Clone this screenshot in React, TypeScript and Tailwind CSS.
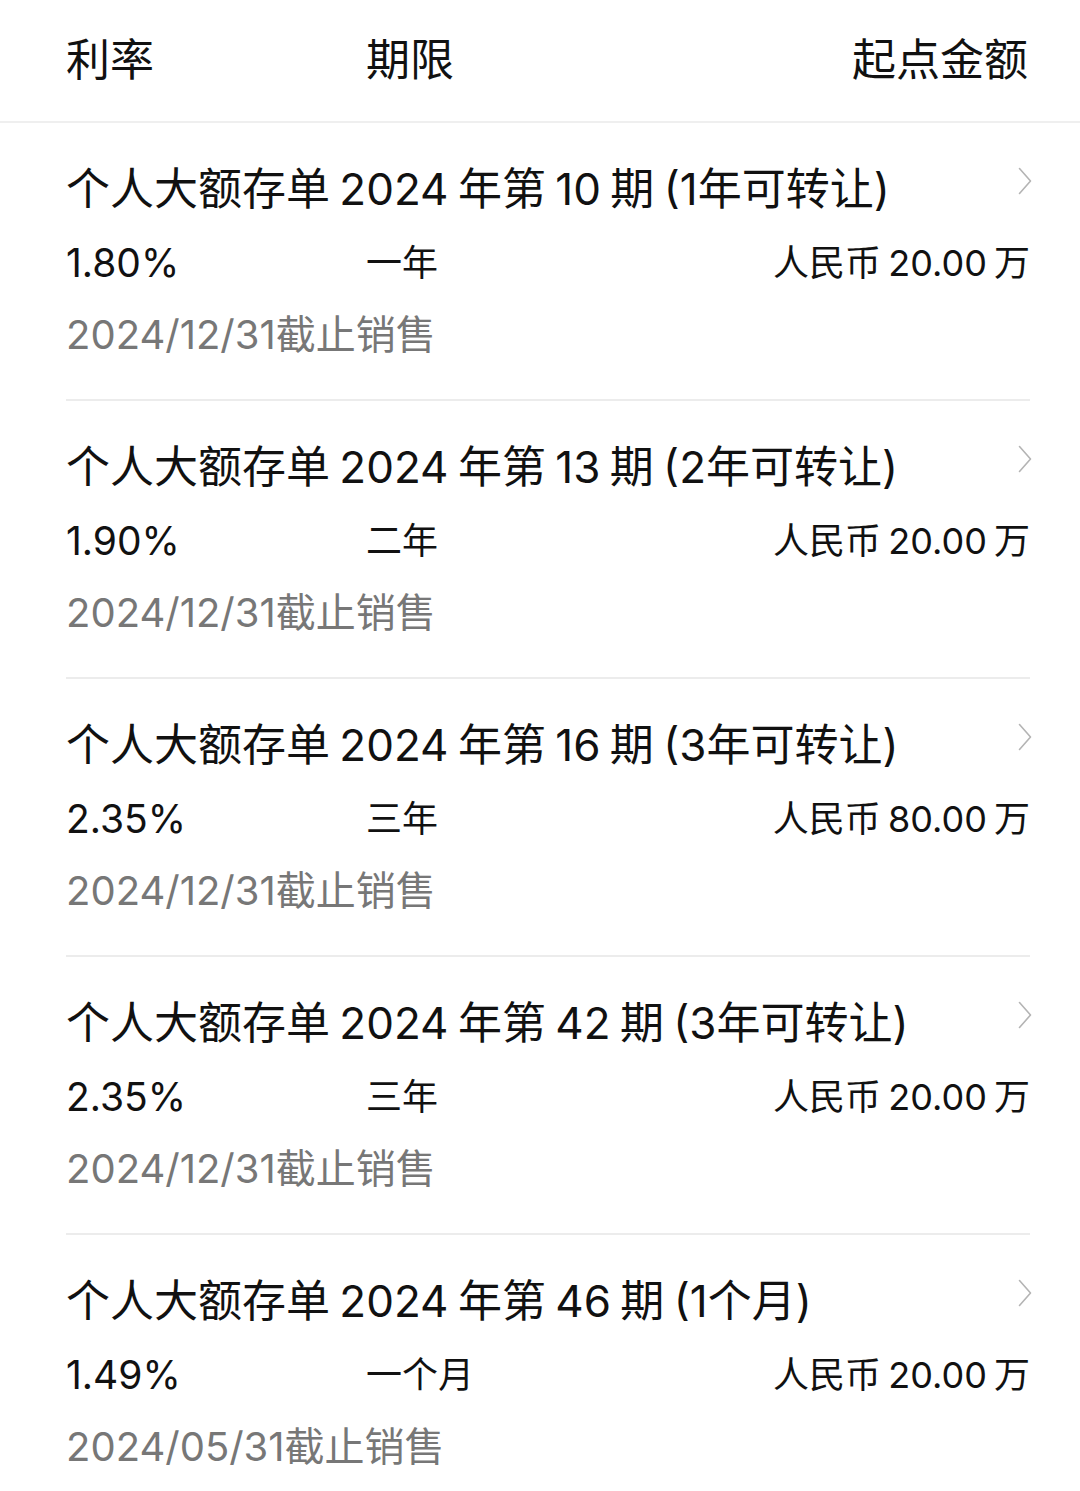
import React from 'react';

interface Deposit {
  title: string;
  rate: string;
  term: string;
  amount: string;
  deadline: string;
}

const deposits: Deposit[] = [
  { title: '个人大额存单 2024 年第 10 期 (1年可转让)', rate: '1.80%', term: '一年', amount: '人民币 20.00 万', deadline: '2024/12/31截止销售' },
  { title: '个人大额存单 2024 年第 13 期 (2年可转让)', rate: '1.90%', term: '二年', amount: '人民币 20.00 万', deadline: '2024/12/31截止销售' },
  { title: '个人大额存单 2024 年第 16 期 (3年可转让)', rate: '2.35%', term: '三年', amount: '人民币 80.00 万', deadline: '2024/12/31截止销售' },
  { title: '个人大额存单 2024 年第 42 期 (3年可转让)', rate: '2.35%', term: '三年', amount: '人民币 20.00 万', deadline: '2024/12/31截止销售' },
  { title: '个人大额存单 2024 年第 46 期 (1个月)', rate: '1.49%', term: '一个月', amount: '人民币 20.00 万', deadline: '2024/05/31截止销售' },
];

// latin glyphs from Inter, hanzi fall through to Noto CJK
const font = { fontFamily: 'Inter, "Noto Sans CJK SC", sans-serif' };

const Chevron = () => (
  <svg width="14" height="28" viewBox="0 0 14 28" fill="none" className="shrink-0">
    <path d="M1.5 1.5L12.5 14L1.5 26.5" stroke="#b4b4b4" strokeWidth="1.6" strokeLinecap="round" strokeLinejoin="round" />
  </svg>
);

const DepositRow = ({ item, last }: { item: Deposit; last: boolean }) => (
  <div className={`h-[278px] pt-[42px] ${last ? '' : 'border-b-2 border-[#ececec]'}`}>
    <div className="flex items-start justify-between">
      <div className="h-[48px] whitespace-nowrap text-[44px] leading-[48px] text-[#111]">{item.title}</div>
      <div className="mt-[2px] mr-[-2px]">
        <Chevron />
      </div>
    </div>
    <div className="mt-[30px] flex h-[40px] items-center text-[36px] leading-[40px] text-[#111]">
      <div className="w-[300px] text-[39px]">{item.rate}</div>
      <div className="flex-1">{item.term}</div>
      <div>{item.amount}</div>
    </div>
    <div className="mt-[30px] h-[44px] text-[40px] leading-[44px] text-[#777]">{item.deadline}</div>
  </div>
);

export default function App() {
  return (
    <div className="min-h-[1491px] w-[1080px] bg-white [word-spacing:-3px]" style={font}>
      <div className="flex h-[123px] items-center border-b-2 border-[#efefef] pl-[66px] pr-[52px] pb-[2px] text-[44px] text-[#111]">
        <div className="w-[300px]">利率</div>
        <div className="flex-1">期限</div>
        <div>起点金额</div>
      </div>
      <div className="pl-[66px] pr-[50px]">
        {deposits.map((item, index) => (
          <DepositRow key={index} item={item} last={index === deposits.length - 1} />
        ))}
      </div>
    </div>
  );
}
